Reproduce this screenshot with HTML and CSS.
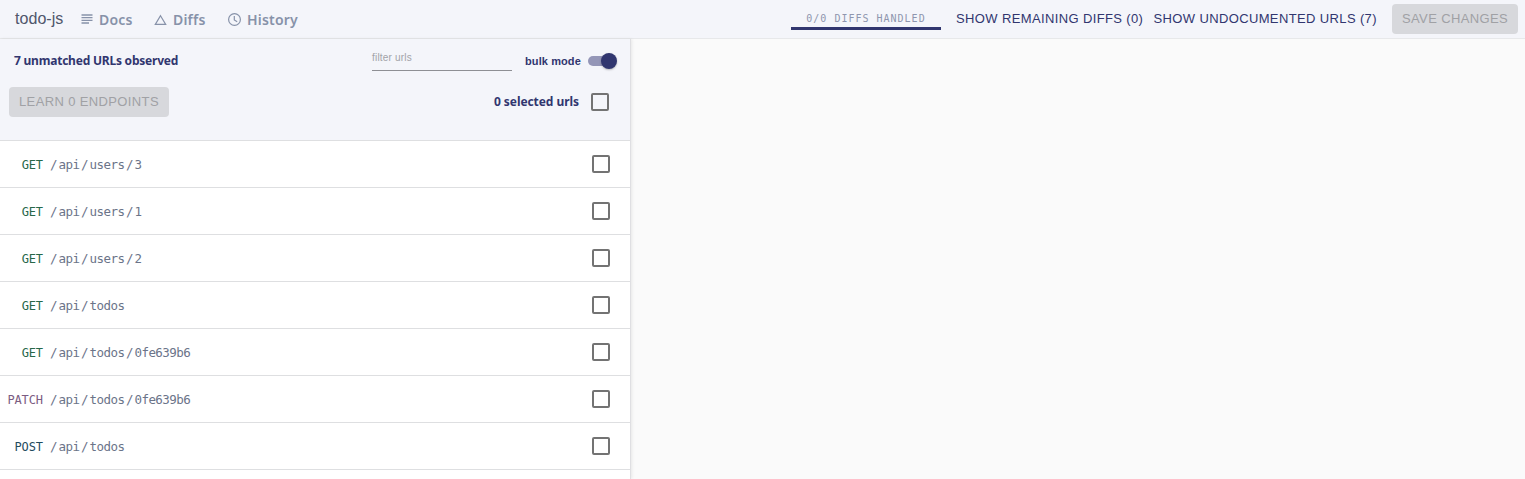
FILE: index.html
```html
<!DOCTYPE html>
<html lang="en">
<head>
<meta charset="utf-8">
<title>todo-js</title>
<link rel="stylesheet" href="styles.css">
</head>
<body>
<header class="topbar">
  <div class="project">todo-js</div>
  <nav class="nav">
    <a class="nav-link docs"><svg width="12" height="10" viewBox="0 0 12 10"><path d="M.5 1h11M.5 3.7h11M.5 6.4h11M.5 9h7.5" stroke="currentColor" stroke-width="1.3"/></svg><span>Docs</span></a>
    <a class="nav-link diffs"><svg width="13" height="12" viewBox="0 0 13 12"><path d="M6.5 1.7 11.7 10.4H1.3z" fill="none" stroke="currentColor" stroke-width="1.2"/></svg><span>Diffs</span></a>
    <a class="nav-link history"><svg width="14" height="14" viewBox="0 0 14 14"><g fill="none" stroke="currentColor" stroke-width="1.2"><circle cx="6.5" cy="6.5" r="5.9"/><path d="M6.3 3v3.9l2.9 1.8"/></g></svg><span>History</span></a>
  </nav>
  <div class="actions">
    <div class="progress"><span>0/0 DIFFS HANDLED</span></div>
    <button class="text-button remaining"><span>SHOW REMAINING DIFFS (0)</span></button>
    <button class="text-button undocumented"><span>SHOW UNDOCUMENTED URLS (7)</span></button>
    <button class="disabled-button save"><span>SAVE CHANGES</span></button>
  </div>
</header>
<main class="panel">
  <section class="panel-head">
    <div class="filter-row">
      <h2 class="title"><span>7 unmatched URLs observed</span></h2>
      <div class="filter"><span>filter urls</span></div>
      <div class="bulk"><span>bulk mode</span></div>
      <div class="switch"><i class="thumb"></i></div>
    </div>
    <div class="select-row">
      <button class="disabled-button learn"><span>LEARN 0 ENDPOINTS</span></button>
      <div class="selected"><span>0 selected urls</span></div>
      <i class="checkbox"></i>
    </div>
  </section>
  <ul class="urls">
    <li class="url"><span class="method get">GET</span><span class="path"><b>/</b>api<b>/</b>users<b>/</b>3</span><i class="checkbox"></i></li>
    <li class="url"><span class="method get">GET</span><span class="path"><b>/</b>api<b>/</b>users<b>/</b>1</span><i class="checkbox"></i></li>
    <li class="url"><span class="method get">GET</span><span class="path"><b>/</b>api<b>/</b>users<b>/</b>2</span><i class="checkbox"></i></li>
    <li class="url"><span class="method get">GET</span><span class="path"><b>/</b>api<b>/</b>todos</span><i class="checkbox"></i></li>
    <li class="url"><span class="method get">GET</span><span class="path"><b>/</b>api<b>/</b>todos<b>/</b>0fe639b6</span><i class="checkbox"></i></li>
    <li class="url"><span class="method patch">PATCH</span><span class="path"><b>/</b>api<b>/</b>todos<b>/</b>0fe639b6</span><i class="checkbox"></i></li>
    <li class="url"><span class="method post">POST</span><span class="path"><b>/</b>api<b>/</b>todos</span><i class="checkbox"></i></li>
  </ul>
</main>
</body>
</html>
```
FILE: styles.css
```css
* { box-sizing: border-box; }
body {
  margin: 0;
  height: 479px;
  overflow: hidden;
  display: flex;
  flex-direction: column;
  background: #fafafa;
  font-family: "Liberation Sans", Arial, sans-serif;
}
span { white-space: nowrap; }
.topbar {
  height: 39px;
  flex: none;
  display: flex;
  align-items: center;
  background: #f4f5fa;
  border-bottom: 1px solid #e7e8ea;
}
.project {
  width: 66px;
  margin-left: 15px;
  font-size: 16px;
  letter-spacing: 0.05px;
  line-height: 20px;
  color: #4f566b;
}
.nav { display: flex; }
.nav-link {
  display: flex;
  align-items: center;
  height: 20px;
  margin-top: 1px;
  color: #8792a9;
  font: 600 14px/20px "Noto Sans", sans-serif;
  letter-spacing: 0.2px;
}
.nav-link svg { flex: none; }
.docs { width: 73px; gap: 6px; }
.diffs { width: 74px; gap: 6px; }
.history { gap: 5px; }
.docs svg { margin-top: -1px; }
.actions {
  display: flex;
  align-items: center;
  margin-left: auto;
  padding-right: 7px;
}
.progress {
  width: 150px;
  height: 22px;
  margin: -1px 15px 0 0;
  padding-top: 1px;
  border-bottom: 3px solid #31366f;
  text-align: center;
  font: 10px/20px "DejaVu Sans Mono", monospace;
  letter-spacing: 1px;
  color: #8f96ae;
}
button {
  height: 30px;
  border: 0;
  padding: 0;
  background: none;
  text-align: left;
  font: 13px/30px "Liberation Sans", Arial, sans-serif;
  letter-spacing: 0.37px;
}
.text-button { color: #31366f; }
.remaining { width: 197.5px; }
.undocumented { width: 238.5px; }
.disabled-button {
  padding-left: 10px;
  border-radius: 4px;
  background: #d7d8dc;
  color: #a0a1a5;
}
.save { width: 126px; }
.panel {
  width: 631px;
  flex: 1;
  background: #fff;
  border-right: 1px solid #dfdfe2;
  box-shadow: 1px 0 3px #00000014;
}
.panel-head {
  height: 102px;
  background: #f4f5fa;
  border-bottom: 1px solid #dedfe1;
  color: #31366f;
}
.filter-row {
  display: flex;
  height: 43px;
  padding-left: 14px;
  align-items: center;
}
.title {
  width: 358px;
  margin: 0;
  font: 700 12px/18px "Noto Sans", sans-serif;
  letter-spacing: -0.22px;
}
.filter {
  width: 140px;
  height: 22px;
  margin: -1px 13px 0 0;
  padding-top: 1px;
  border-bottom: 1px solid #8e8f94;
  font-size: 10px;
  line-height: 16px;
  letter-spacing: 0.2px;
  color: #a2a3a8;
}
.bulk {
  width: 63px;
  font-size: 11px;
  font-weight: 700;
  line-height: 16px;
  letter-spacing: 0.1px;
}
.switch {
  width: 27px;
  height: 10px;
  margin-top: 1px;
  border-radius: 5px;
  background: #9496b7;
  display: flex;
  align-items: center;
  justify-content: flex-end;
}
.thumb {
  width: 16px;
  height: 16px;
  flex: none;
  margin-right: -2px;
  border-radius: 50%;
  background: #31366f;
  box-shadow: 0 1px 2px #00000040;
}
.select-row {
  display: flex;
  align-items: center;
  height: 40px;
  padding-left: 9px;
}
.learn { width: 160px; }
.selected {
  width: 422px;
  padding-left: 325px;
  font: 700 12px/18px "Noto Sans", sans-serif;
  letter-spacing: -0.07px;
}
.checkbox {
  flex: none;
  width: 18px;
  height: 18px;
  border: 2px solid #737373;
  border-radius: 2px;
}
.urls { margin: 0; padding: 0; list-style: none; }
.url {
  height: 47px;
  display: flex;
  align-items: center;
  border-bottom: 1px solid #dedfe1;
  padding-right: 20px;
  font: 12.5px/20px "DejaVu Sans Mono", monospace;
  letter-spacing: -0.54px;
}
.method, .path { padding-top: 2px; }
.method { width: 43px; text-align: right; font-size: 12px; letter-spacing: -0.1px; }
.get { color: #276749; }
.patch { color: #7b5c82; }
.post { color: #1f4b5e; }
.path { margin-left: 7px; margin-right: auto; color: #6b7489; }
.path b { font-weight: 400; margin: 0 1.5px; }
.path b:first-child { margin-left: 0; }
```
